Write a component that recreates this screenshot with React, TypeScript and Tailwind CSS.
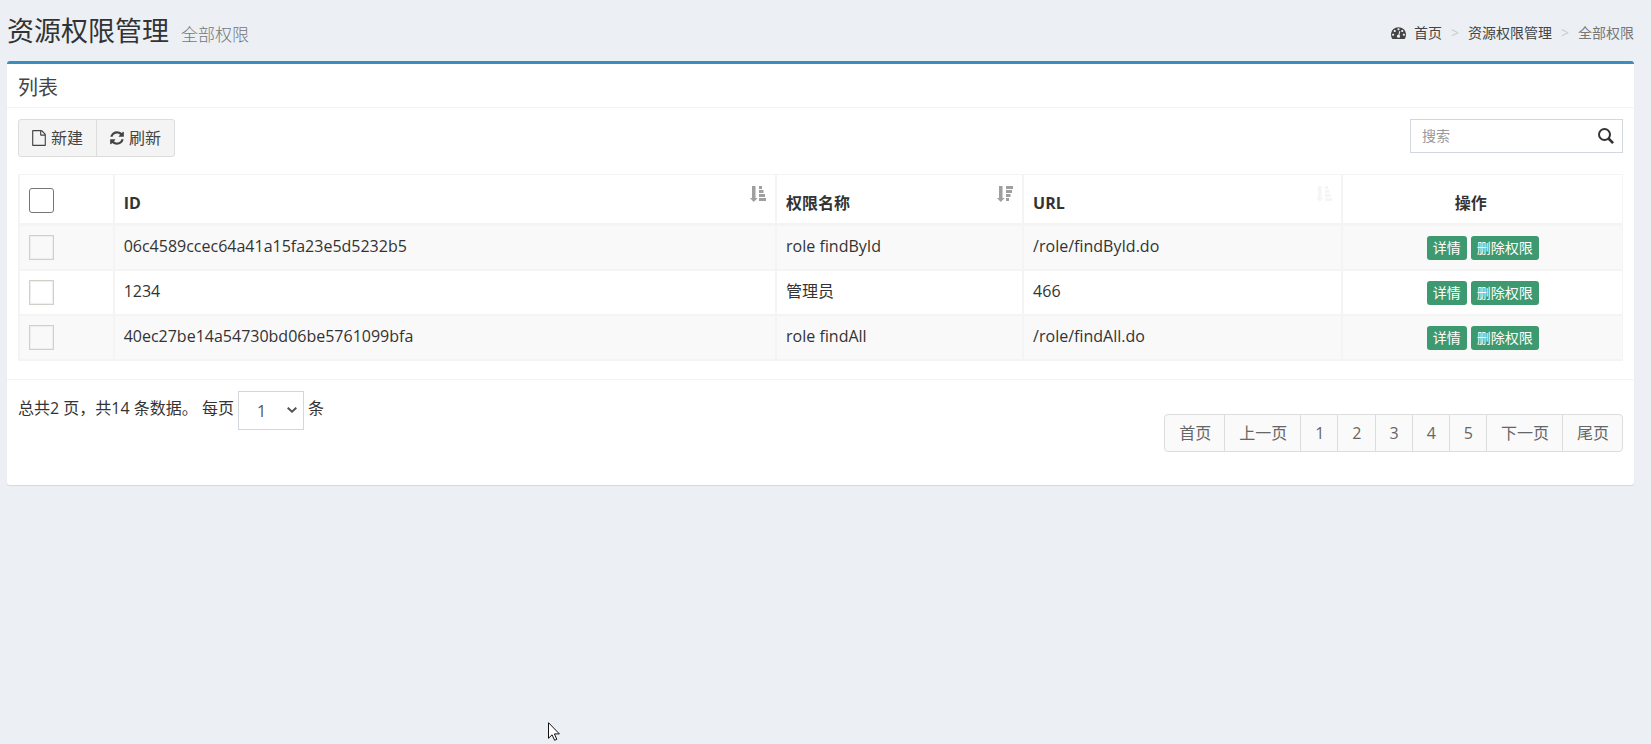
import { useState } from "react";

interface Permission {
  id: string;
  name: string;
  url: string;
}

const permissions: Permission[] = [
  { id: "06c4589ccec64a41a15fa23e5d5232b5", name: "role findById", url: "/role/findById.do" },
  { id: "1234", name: "管理员", url: "466" },
  { id: "40ec27be14a54730bd06be5761099bfa", name: "role findAll", url: "/role/findAll.do" },
];

const pages = ["首页", "上一页", "1", "2", "3", "4", "5", "下一页", "尾页"];

function DashboardIcon() {
  return (
    <svg viewBox="0 0 1792 1792" className="size-[15px]" fill="currentColor" aria-hidden="true">
      <path d="M384 1152q0-53-37.5-90.5t-90.5-37.5-90.5 37.5-37.5 90.5 37.5 90.5 90.5 37.5 90.5-37.5 37.5-90.5zm192-448q0-53-37.5-90.5t-90.5-37.5-90.5 37.5-37.5 90.5 37.5 90.5 90.5 37.5 90.5-37.5 37.5-90.5zm428 481l101-382q6-26-7.5-48.5t-38.5-29.5-48 6.5-30 39.5l-101 382q-60 5-107 43.5t-63 98.5q-20 77 20 146t117 89 146-20 89-117q16-60-6-117t-72-91zm660-33q0-53-37.5-90.5t-90.5-37.5-90.5 37.5-37.5 90.5 37.5 90.5 90.5 37.5 90.5-37.5 37.5-90.5zm-640-640q0-53-37.5-90.5t-90.5-37.5-90.5 37.5-37.5 90.5 37.5 90.5 90.5 37.5 90.5-37.5 37.5-90.5zm448 192q0-53-37.5-90.5t-90.5-37.5-90.5 37.5-37.5 90.5 37.5 90.5 90.5 37.5 90.5-37.5 37.5-90.5zm320 448q0 261-141 483-19 29-54 29h-1402q-35 0-54-29-141-221-141-483 0-182 71-348t191-286 286-191 348-71 348 71 286 191 191 286 71 348z" />
    </svg>
  );
}

function FileIcon() {
  return (
    <svg viewBox="0 0 1536 1792" className="h-4 w-[14px]" fill="currentColor" aria-hidden="true">
      <path d="M1468 380q28 28 48 76t20 88v1152q0 40-28 68t-68 28h-1344q-40 0-68-28t-28-68v-1600q0-40 28-68t68-28h896q40 0 88 20t76 48zm-444-244v376h376q-10-29-22-41l-313-313q-12-12-41-22zm384 1528v-1024h-416q-40 0-68-28t-28-68v-416h-768v1536h1280z" />
    </svg>
  );
}

function RefreshIcon() {
  return (
    <svg viewBox="0 0 1536 1792" className="h-4 w-[14px]" fill="currentColor" aria-hidden="true">
      <path d="M1511 1056q0 5-1 7-64 268-268 434.500t-478 166.500q-146 0-282.500-55t-243.500-157l-129 129q-19 19-45 19t-45-19-19-45v-448q0-26 19-45t45-19h448q26 0 45 19t19 45-19 45l-137 137q71 66 161 102t187 36q134 0 250-65t186-179q11-17 53-117 8-23 30-23h192q13 0 22.500 9.500t9.500 22.500zm25-800v448q0 26-19 45t-45 19h-448q-26 0-45-19t-19-45 19-45l138-138q-148-137-349-137-134 0-250 65t-186 179q-11 17-53 117-8 23-30 23h-199q-13 0-22.500-9.500t-9.500-22.500v-7q65-268 270-434.500t480-166.500q146 0 284 55.500t245 156.500l130-129q19-19 45-19t45 19 19 45z" />
    </svg>
  );
}

function SearchIcon() {
  return (
    <svg viewBox="0 0 16 16" className="size-4" fill="none" stroke="currentColor" aria-hidden="true">
      <circle cx="6.500" cy="6.500" r="5.500" strokeWidth="2" />
      <path d="M10.500 10.500l4.600 4.600" strokeWidth="2.600" />
    </svg>
  );
}

function SortIcon({ desc }: { desc?: boolean }) {
  return (
    <svg viewBox="0 0 16 16" className="size-4" fill="currentColor" aria-hidden="true">
      <path d="M2 0h3.500v12h2.200l-4 4-3.700-4h2z" />
      {desc ? (
        <path d="M9 0h7v3h-7zM9 4h6v3h-6zM9 8h4.500v3h-4.500zM9 12h3v3h-3z" />
      ) : (
        <path d="M9 0h3v3h-3zM9 4h4.500v3h-4.500zM9 8h6v3h-6zM9 12h7v3h-7z" />
      )}
    </svg>
  );
}

export default function App() {
  const [selected, setSelected] = useState<string[]>([]);
  const [keyword, setKeyword] = useState("");

  const toggle = (id: string) => {
    setSelected(
      selected.includes(id) ? selected.filter((item) => item !== id) : [...selected, id]
    );
  };

  const toggleAll = () => {
    setSelected(selected.length === permissions.length ? [] : permissions.map((p) => p.id));
  };

  return (
    <div className="relative min-h-screen bg-[#ecf0f5] pr-[17px] pl-[7px] font-['Open_Sans','Noto_Sans_CJK_SC',sans-serif] text-base leading-6 text-[#333]">
      <header className="flex h-[61px] items-center justify-between pt-1">
        <h1 className="flex items-baseline gap-3 text-[27px] font-normal">
          资源权限管理
          <small className="text-[17px] font-light text-[#777]">全部权限</small>
        </h1>
        <nav aria-label="breadcrumb">
          <ol className="flex items-center text-[14px] text-[#444]">
            <li>
              <a href="#" className="flex items-center gap-2">
                <DashboardIcon />
                首页
              </a>
            </li>
            <li className="px-[9px] text-[#ccc]" aria-hidden="true">&gt;</li>
            <li>
              <a href="#">资源权限管理</a>
            </li>
            <li className="px-[9px] text-[#ccc]" aria-hidden="true">&gt;</li>
            <li className="text-[#777]">全部权限</li>
          </ol>
        </nav>
      </header>

      <section className="rounded-[3px] border-t-3 border-[#3c8dbc] bg-white shadow-[0_1px_1px_rgba(0,0,0,0.1)]">
        <div className="border-b border-[#f4f4f4] px-[11px] pt-3 pb-2">
          <h3 className="text-[20px] leading-[23px] text-[#444]">列表</h3>
        </div>

        <div className="p-[11px]">
          <div className="flex items-start justify-between">
            <div className="flex h-[38px] overflow-hidden rounded-[3px] border border-[#ddd] bg-[#f4f4f4] text-[#444]">
              <button type="button" title="新建" className="flex items-center gap-[5px] px-[13px]">
                <FileIcon />
                新建
              </button>
              <button type="button" title="刷新" className="flex items-center gap-[5px] border-l border-[#ddd] px-[13px]">
                <RefreshIcon />
                刷新
              </button>
            </div>
            <div className="flex h-[34px] w-[213px] items-center border border-[#d2d6de] pr-2">
              <input
                type="text"
                placeholder="搜索"
                aria-label="搜索"
                value={keyword}
                onChange={(e) => setKeyword(e.target.value)}
                className="min-w-0 flex-1 px-[11px] text-[14px] outline-none placeholder:text-[#999]"
              />
              <SearchIcon />
            </div>
          </div>

          <table className="mt-[17px] w-full table-fixed border-separate border-spacing-0 border-b border-l border-[#f4f4f4] text-left">
            <colgroup>
              <col className="w-[5.9%]" />
              <col className="w-[41.3%]" />
              <col className="w-[15.4%]" />
              <col className="w-[19.9%]" />
              <col className="w-[17.5%]" />
            </colgroup>
            <thead>
              <tr className="h-[51px] align-bottom *:border *:border-b-2 *:border-[#f4f4f4] *:px-[9px] *:pb-2">
                <th>
                  <input
                    type="checkbox"
                    aria-label="全选"
                    checked={selected.length === permissions.length}
                    onChange={toggleAll}
                    className="mb-[2px] block size-[25px] appearance-none rounded-[3px] border border-[#767676] bg-white checked:bg-[#3c8dbc]"
                  />
                </th>
                <th className="relative">
                  ID
                  <span className="absolute top-[11px] right-[9px] text-[#9f9f9f]">
                    <SortIcon />
                  </span>
                </th>
                <th className="relative">
                  权限名称
                  <span className="absolute top-[11px] right-[9px] text-[#9f9f9f]">
                    <SortIcon desc />
                  </span>
                </th>
                <th className="relative">
                  URL
                  <span className="absolute top-[11px] right-[9px] text-[#f5f5f5]">
                    <SortIcon />
                  </span>
                </th>
                <th className="text-center">
                  <span className="mr-6">操作</span>
                </th>
              </tr>
            </thead>
            <tbody>
              {permissions.map((p) => (
                <tr key={p.id} className="h-[45px] align-top odd:bg-[#f9f9f9] *:border *:border-[#f4f4f4] *:px-[9px]">
                  <td className="pt-[9px]">
                    <input
                      type="checkbox"
                      aria-label={p.id}
                      checked={selected.includes(p.id)}
                      onChange={() => toggle(p.id)}
                      className="block size-[25px] appearance-none border border-[#d2cfca] shadow-[inset_0_0_1px_1px_#f0eeec] checked:bg-[#3c8dbc]"
                    />
                  </td>
                  <td className="pt-2">{p.id}</td>
                  <td className="pt-2">{p.name}</td>
                  <td className="pt-2">{p.url}</td>
                  <td className="pt-[10px]">
                    <div className="flex justify-center gap-1 text-[14px] leading-[24px] text-white">
                      <button type="button" className="rounded-[3px] bg-[#3d9970] px-[6px]">详情</button>
                      <button type="button" className="rounded-[3px] bg-[#3d9970] px-[6px]">删除权限</button>
                    </div>
                  </td>
                </tr>
              ))}
            </tbody>
          </table>
        </div>

        <footer className="mt-[7px] flex items-start justify-between border-t border-[#f4f4f4] px-[11px] pt-[11px] pb-[33px]">
          <div className="flex items-start gap-1">
            <label htmlFor="page-size" className="pt-[5px]">
              总共2 页，共14 条数据。 每页
            </label>
            <div className="relative">
              <select
                id="page-size"
                className="block h-[39px] w-[66px] appearance-none border border-[#d2d6de] bg-white pl-[18px] text-[#555]"
              >
                <option>1</option>
                <option>2</option>
                <option>3</option>
              </select>
              <svg
                viewBox="0 0 10 6"
                className="pointer-events-none absolute top-4 right-[7px] h-[6px] w-[10px]"
                fill="none"
                stroke="#555"
                strokeWidth="2"
                aria-hidden="true"
              >
                <path d="M.7.700l4.300 4 4.300-4" />
              </svg>
            </div>
            <span className="pt-[5px]">条</span>
          </div>
          <ul className="mt-[23px] flex h-[38px] overflow-hidden rounded-[4px] border border-[#ddd] bg-[#fafafa] text-[#666]">
            {pages.map((page) => (
              <li key={page} className="border-l border-[#ddd] first:border-l-0">
                <a href="#" className="flex h-full items-center pr-[13px] pl-[14px]">
                  {page}
                </a>
              </li>
            ))}
          </ul>
        </footer>
      </section>

      <svg viewBox="0 0 12 19" className="absolute top-[722px] left-[548px] h-[19px] w-3" aria-hidden="true">
        <path d="M.5.700v15.600l3.600-3.500 2.500 5.500 2.200-1-2.400-5.400h5z" fill="#fff" stroke="#111" />
      </svg>
    </div>
  );
}
